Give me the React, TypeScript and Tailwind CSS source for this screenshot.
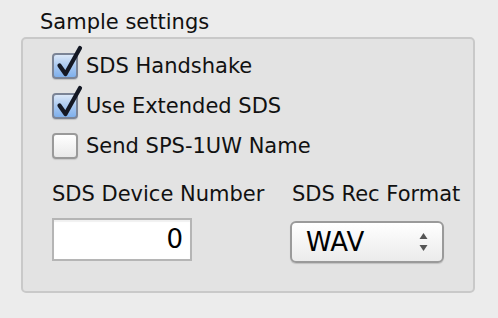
import type { ReactNode } from 'react';

const font = { fontFamily: '"DejaVu Sans", "Liberation Sans", sans-serif' };

function Checkbox({ checked }: { checked: boolean }) {
  return (
    <div className="relative h-[26px] w-[26px] shrink-0">
      {checked ? (
        <div className="h-full w-full rounded-[4px] border-2 border-[#7b8496] bg-gradient-to-b from-[#dbe8f8] via-[#a9c8f0] to-[#7fb0ec] shadow-[0_1px_1px_rgba(0,0,0,0.15)]" />
      ) : (
        <div className="h-full w-full rounded-[4px] border-2 border-[#9a9a9a] bg-gradient-to-b from-[#ffffff] to-[#e9e9e9] shadow-[0_1px_1px_rgba(0,0,0,0.12)]" />
      )}
      {checked && (
        <svg
          className="absolute left-0 top-0 overflow-visible"
          width="26"
          height="26"
          viewBox="0 0 26 26"
        >
          <path
            d="M7.5 12.5 L13.5 21 L28 -5"
            fill="none"
            stroke="#141824"
            strokeWidth="4.2"
            strokeLinecap="round"
            strokeLinejoin="round"
          />
        </svg>
      )}
    </div>
  );
}

function CheckRow({ checked, children }: { checked: boolean; children: ReactNode }) {
  return (
    <div className="flex h-[26px] items-center gap-[8px]">
      <Checkbox checked={checked} />
      <span className="text-[21px] leading-[24px] text-[#111]">{children}</span>
    </div>
  );
}

export default function App() {
  return (
    <div className="h-[318px] w-[498px] bg-[#ececec]" style={font}>
      <div className="pl-[40px] pt-[10px] text-[21px] leading-[24px] text-[#111]">Sample settings</div>
      <div className="ml-[21px] mt-[3px] h-[256px] w-[454px] rounded-[5px] border-2 border-[#c9c9c9] bg-[#e3e3e3] pl-[29px] pt-[14px]">
        <div className="flex flex-col gap-[14px]">
          <CheckRow checked>SDS Handshake</CheckRow>
          <CheckRow checked>Use Extended SDS</CheckRow>
          <CheckRow checked={false}>Send SPS-1UW Name</CheckRow>
        </div>
        <div className="mt-[23px] flex">
          <div className="w-[238px]">
            <div className="text-[21px] leading-[24px] text-[#111]">SDS Device Number</div>
            <div className="mt-[12px] flex h-[43px] w-[140px] items-center justify-end border-2 border-[#b5b5b5] bg-white pr-[7px] text-[26px] text-black shadow-[inset_0_2px_1px_rgba(0,0,0,0.06)]">
              0
            </div>
          </div>
          <div>
            <div className="pl-[2px] text-[21px] leading-[24px] text-[#111]">SDS Rec Format</div>
            <div className="mt-[15px] flex h-[42px] w-[154px] items-center justify-between rounded-[6px] border-2 border-[#9a9a9a] bg-gradient-to-b from-white to-[#ebebeb] pl-[14px] pr-[14px] text-[26px] text-black shadow-[0_1px_1px_rgba(0,0,0,0.15)]">
              <span>WAV</span>
              <svg width="9" height="20" viewBox="0 0 9 20">
                <path d="M4.5 1 L8.5 7 L0.5 7 Z" fill="#555" />
                <path d="M4.5 19 L8.5 13 L0.5 13 Z" fill="#555" />
              </svg>
            </div>
          </div>
        </div>
      </div>
    </div>
  );
}
